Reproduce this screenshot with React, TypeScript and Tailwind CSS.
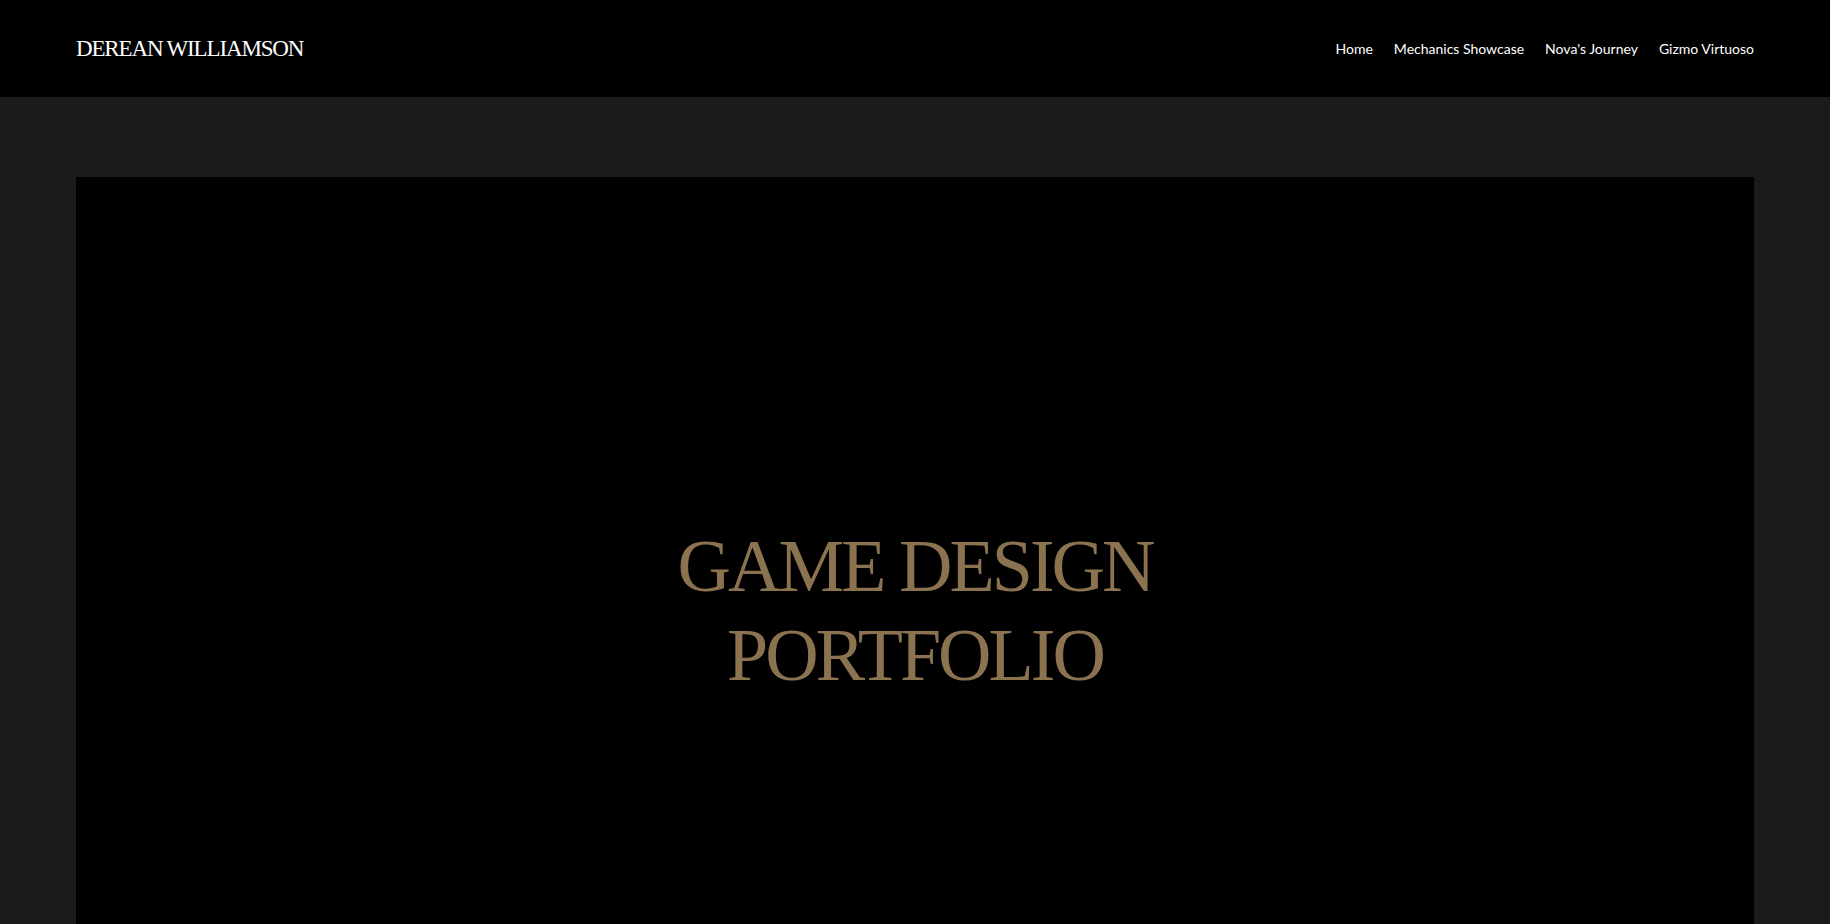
import React from "react";

const navLinks = ["Home", "Mechanics Showcase", "Nova's Journey", "Gizmo Virtuoso"];

export default function App() {
  return (
    <div className="min-h-screen bg-[#1b1b1b]">
      {/* Header */}
      <header className="flex h-[97px] items-center justify-between bg-black px-[76px]">
        <a
          href="#"
          className="pt-[2px] font-['Liberation_Serif',serif] text-[23px] tracking-[-0.05em] text-white"
        >
          DEREAN WILLIAMSON
        </a>
        <nav className="flex items-center gap-[21px] font-['Lato',sans-serif] text-[14px] text-white">
          {navLinks.map((link) => (
            <a key={link} href="#" className="hover:text-[#8b7350]">
              {link}
            </a>
          ))}
        </nav>
      </header>

      {/* Hero */}
      <main className="px-[76px] pt-[80px]">
        <section className="flex h-[868px] items-center justify-center bg-black">
          <h1 className="text-center font-['Liberation_Serif',serif] text-[74px] leading-[89px] tracking-[-0.04em] text-[#8b7350]">
            GAME DESIGN
            <br />
            PORTFOLIO
          </h1>
        </section>
      </main>
    </div>
  );
}
